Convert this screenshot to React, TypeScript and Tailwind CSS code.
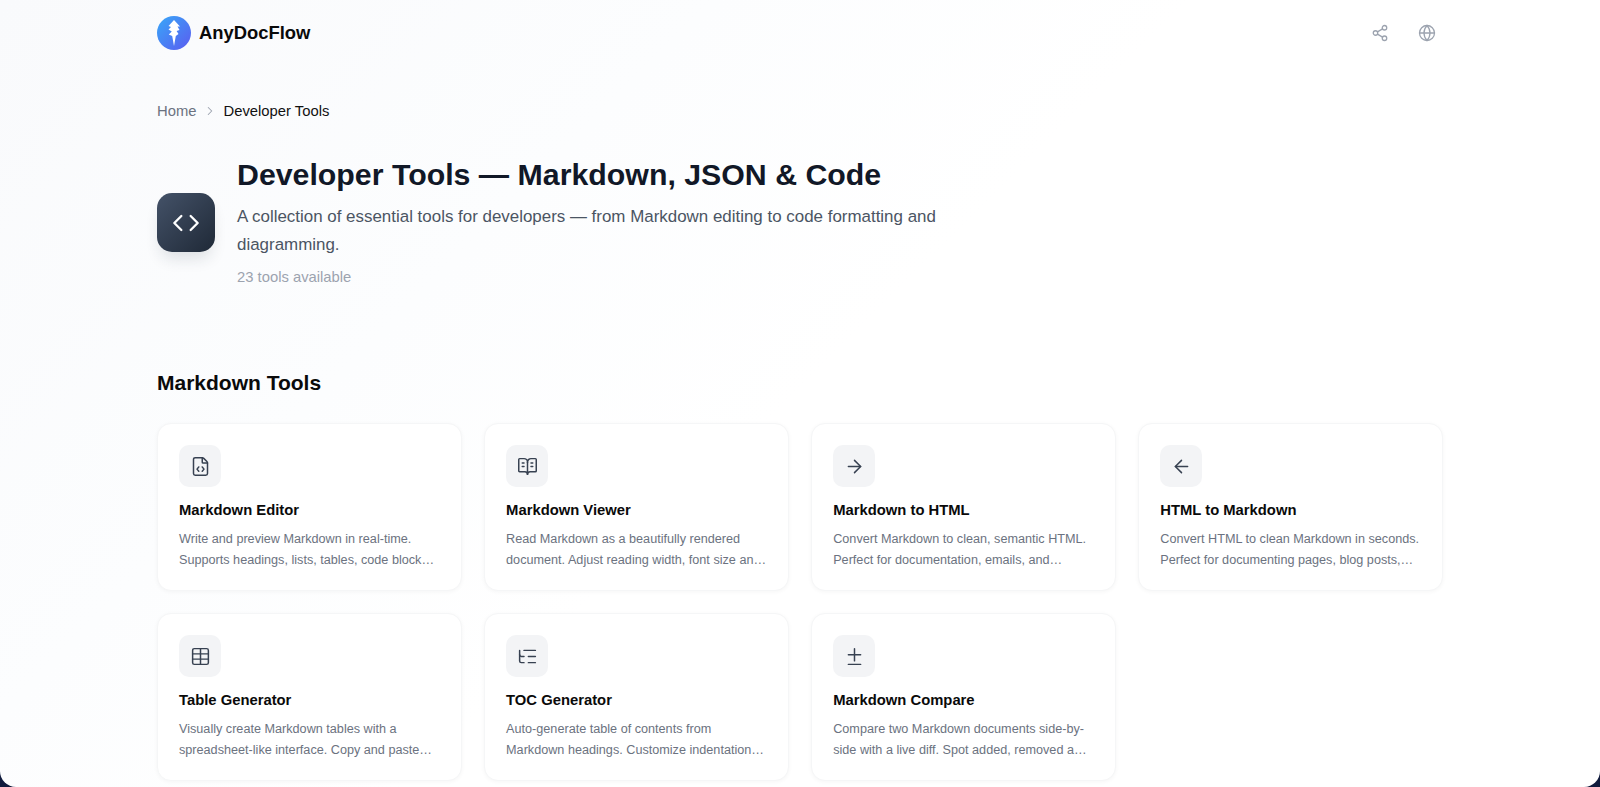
import React from "react";
import { ArrowLeft, ArrowRight, BookOpenText, ChevronRight, Code, Diff, FileCode, Globe, ListTree, Share2, Table } from "lucide-react";

const tools = [
  { icon: FileCode, title: "Markdown Editor", desc: "Write and preview Markdown in real-time. Supports headings, lists, tables, code block…" },
  { icon: BookOpenText, title: "Markdown Viewer", desc: "Read Markdown as a beautifully rendered document. Adjust reading width, font size an…" },
  { icon: ArrowRight, title: "Markdown to HTML", desc: "Convert Markdown to clean, semantic HTML. Perfect for documentation, emails, and…" },
  { icon: ArrowLeft, title: "HTML to Markdown", desc: "Convert HTML to clean Markdown in seconds. Perfect for documenting pages, blog posts,…" },
  { icon: Table, title: "Table Generator", desc: "Visually create Markdown tables with a spreadsheet-like interface. Copy and paste…" },
  { icon: ListTree, title: "TOC Generator", desc: "Auto-generate table of contents from Markdown headings. Customize indentation…" },
  { icon: Diff, title: "Markdown Compare", desc: "Compare two Markdown documents side-by-side with a live diff. Spot added, removed a…" },
];

function Logo() {
  return (
    <svg viewBox="0 0 34 34" className="w-[34px] h-[34px] shrink-0">
      <defs>
        <linearGradient id="lg" x1="0" y1="0" x2="1" y2="1">
          <stop offset="0" stopColor="#38a8f8" />
          <stop offset="1" stopColor="#5b5bf0" />
        </linearGradient>
      </defs>
      <circle cx="17" cy="17" r="17" fill="url(#lg)" />
      <path d="M17 4 L23 10.5 L20.5 10.5 L22.5 14 L19.6 15 L21.5 18 L18.8 20 L17 30 L15.2 20 L11.8 18.5 L14.8 15.5 L11.5 13.5 L14 11 L11.5 10 Z" fill="#fff" />
    </svg>
  );
}

export default function App() {
  return (
    <div className="h-[787px] overflow-hidden bg-[#101b3d] font-['Liberation_Sans',Arial,sans-serif]">
      <div className="h-full overflow-hidden rounded-b-[16px] bg-[linear-gradient(135deg,#f9fafc_0%,#fcfdfe_30%,#ffffff_50%,#ffffff_100%)]">
        <div className="w-[1286px] mx-auto">
          <header className="h-[66px] flex items-center justify-between">
            <div className="flex items-center gap-[8px]">
              <Logo />
              <span className="text-[18.4px] font-bold text-[#0a0a0a]">AnyDocFlow</span>
            </div>
            <div className="flex items-center gap-[29px] pr-[7px] text-[#9ca3af]">
              <Share2 size={18} strokeWidth={1.7} />
              <Globe size={18} strokeWidth={1.7} />
            </div>
          </header>

          <nav className="mt-[35px] h-[20px] flex items-center text-[14.8px] leading-[20px]">
            <span className="text-[#6b7280]">Home</span>
            <ChevronRight size={14} strokeWidth={1.8} className="ml-[7px] mr-[6px] text-[#9ca3af]" />
            <span className="text-[#111111]">Developer Tools</span>
          </nav>

          <section className="mt-[35px] flex items-center gap-[22px]">
            <div className="mt-[2px] w-[58px] h-[59px] rounded-[15px] flex items-center justify-center text-white bg-[linear-gradient(135deg,#445268,#1f2937)] shadow-[0_10px_16px_-4px_rgba(31,41,55,0.14)]">
              <Code size={28} strokeWidth={2} />
            </div>
            <div className="w-[720px]">
              <h1 className="text-[30.3px] leading-[38px] font-bold text-[#111827]">Developer Tools — Markdown, JSON &amp; Code</h1>
              <p className="mt-[9px] text-[16.93px] leading-[27.5px] text-[#4b5563]">A collection of essential tools for developers — from Markdown editing to code formatting and diagramming.</p>
              <p className="mt-[9px] text-[14.8px] leading-[20px] text-[#9ca3af]">23 tools available</p>
            </div>
          </section>

          <h2 className="mt-[82px] text-[21px] leading-[28px] font-bold text-[#0a0a0a]">Markdown Tools</h2>

          <div className="mt-[26px] grid grid-cols-4 gap-x-[22.4px] gap-y-[22px]">
            {tools.map((t) => (
              <div key={t.title} className="h-[168px] rounded-[14px] border border-[#f5f6f7] bg-white p-[21px] shadow-[0_1px_4px_rgba(0,0,0,0.04)]">
                <div className="w-[42px] h-[42px] rounded-[10px] bg-[#f3f4f6] flex items-center justify-center text-[#374151]">
                  <t.icon size={21} strokeWidth={1.7} />
                </div>
                <h3 className="mt-[13px] text-[14.8px] leading-[20px] font-bold text-[#0a0a0a]">{t.title}</h3>
                <p className="mt-[9px] text-[12.65px] leading-[21px] text-[#6b7280]">{t.desc}</p>
              </div>
            ))}
          </div>
        </div>
      </div>
    </div>
  );
}
